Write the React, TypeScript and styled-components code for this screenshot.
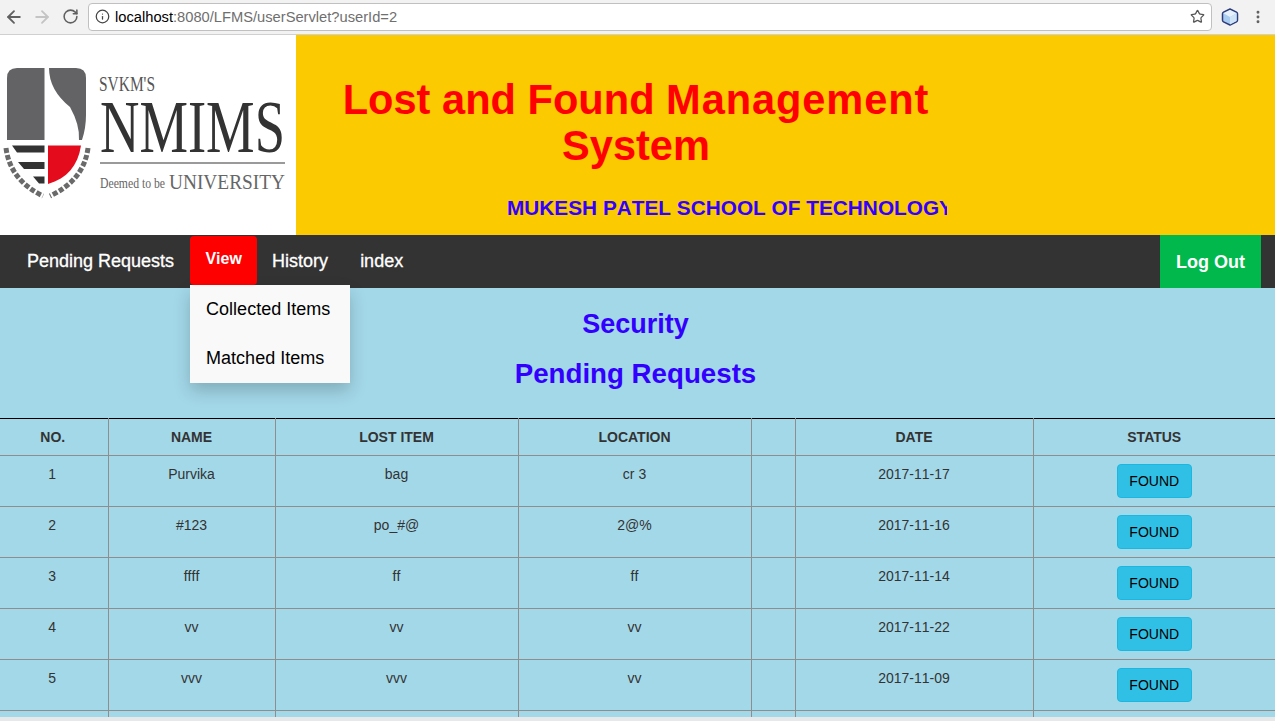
import React from 'react'
import styled, { createGlobalStyle } from 'styled-components'
import { ArrowLeft, ArrowRight, Info, MoreVertical, RotateCw, Star } from 'lucide-react'

const SANS = '"Liberation Sans", Arial, sans-serif'

const rows = [
  { no: 1, name: 'Purvika', item: 'bag', location: 'cr 3', date: '2017-11-17' },
  { no: 2, name: '#123', item: 'po_#@', location: '2@%', date: '2017-11-16' },
  { no: 3, name: 'ffff', item: 'ff', location: 'ff', date: '2017-11-14' },
  { no: 4, name: 'vv', item: 'vv', location: 'vv', date: '2017-11-22' },
  { no: 5, name: 'vvv', item: 'vvv', location: 'vv', date: '2017-11-09' },
]

const columns = [108, 167, 243, 233, 44, 238, 242]

const GlobalStyle = createGlobalStyle`
  html, body {
    margin: 0;
    padding: 0;
    overflow: hidden;
    background: #a3d8e9;
    font-family: ${SANS};
    font-kerning: none;
  }
  * {
    box-sizing: border-box;
  }
`

const Page = styled.div`
  width: 1275px;
  height: 721px;
  display: flex;
  flex-direction: column;
  overflow: hidden;
`

const BrowserBar = styled.div`
  flex: 0 0 35px;
  display: flex;
  align-items: center;
  padding: 0 6px 1px 4px;
  background: #f2f2f2;
  border-bottom: 1px solid #d0d0d0;
  color: #5f6368;
`

const NavIcon = styled.span<{ $muted?: boolean }>`
  width: 20px;
  height: 20px;
  margin-right: 8px;
  display: flex;
  align-items: center;
  justify-content: center;
  color: ${props => (props.$muted ? '#c4c4c4' : '#606060')};
`

const AddressBox = styled.div`
  width: 1124px;
  height: 28px;
  padding: 0 6px 0 6px;
  display: flex;
  align-items: center;
  background: #fff;
  border: 1px solid #c0c0c0;
  border-radius: 4px;
  font-size: 14.7px;
  color: #6f6f6f;
`

const Host = styled.span`
  color: #000;
`

const Url = styled.span`
  flex: 1;
  margin-left: 5px;
`

const ExtensionSlot = styled.span`
  margin-left: 8px;
  width: 20px;
  height: 20px;
  display: flex;
  align-items: center;
  justify-content: center;
`

const MenuSlot = styled.span`
  margin-left: 8px;
  width: 20px;
  display: flex;
  justify-content: center;
  color: #606060;
`

const Banner = styled.header`
  flex: 0 0 200px;
  display: flex;
  background: #fbca00;
`

const LogoPanel = styled.div`
  width: 296px;
  background: #fff;
  display: flex;
  align-items: center;
`

const TitlePanel = styled.div`
  width: 680px;
  padding: 42px 0 0 0;
  display: flex;
  flex-direction: column;
`

const Title = styled.h1`
  margin: 0;
  font-size: 41.6px;
  line-height: 46px;
  font-weight: 700;
  color: #ff0000;
  text-align: center;
`

const WideWord = styled.span`
  letter-spacing: 0.9px;
`

const Ticker = styled.div`
  margin: 26px 0 0 211px;
  width: 440px;
  overflow: hidden;
  white-space: nowrap;
  font-size: 20.8px;
  line-height: 26px;
  font-weight: 700;
  color: #3300ff;
`

const NavBar = styled.nav`
  flex: 0 0 53px;
  display: flex;
  align-items: flex-start;
  padding: 1px 14px 0 11px;
  background: #333;
`

const NavItem = styled.a`
  height: 49px;
  padding: 2px 16px 0;
  display: flex;
  align-items: center;
  font-size: 18px;
  color: #fff;
  -webkit-text-stroke: 0.3px #fff;
`

const DropdownWrap = styled.div`
  position: relative;
  margin-right: -1px;
`

const ActiveItem = styled.a`
  height: 49px;
  width: 67px;
  padding-bottom: 3px;
  display: flex;
  align-items: center;
  justify-content: center;
  font-size: 16px;
  font-weight: 700;
  color: #fff;
  background: #ff0000;
  border-radius: 4px;
`

const Dropdown = styled.div`
  position: absolute;
  top: 49px;
  left: 0;
  z-index: 2;
  width: 160px;
  height: 98px;
  background: #f9f9f9;
  box-shadow: 0 8px 16px rgba(0, 0, 0, 0.2);
`

const DropdownLink = styled.a`
  display: block;
  height: 49px;
  padding: 0 16px;
  line-height: 48px;
  font-size: 18px;
  color: #000;
`

const LogOut = styled.a`
  margin-left: auto;
  height: 53px;
  width: 101px;
  margin-top: -1px;
  padding-top: 1px;
  display: flex;
  align-items: center;
  justify-content: center;
  font-size: 18px;
  font-weight: 700;
  color: #fff;
  background: #00b84c;
`

const Content = styled.main`
  flex: 1;
  min-height: 0;
  overflow: hidden;
  background: #a3d8e9;
`

const Heading = styled.h2<{ $top: number; $size: number }>`
  margin: ${props => props.$top}px 0 0;
  padding-right: 4px;
  font-size: ${props => props.$size}px;
  line-height: 32px;
  font-weight: 700;
  color: #3300ff;
  text-align: center;
`

const Table = styled.table`
  margin-top: 28px;
  width: 1275px;
  table-layout: fixed;
  border-collapse: collapse;
  border-top: 1px solid #000;
  font-size: 14px;
  color: #333;
`

const HeadCell = styled.th`
  height: 37px;
  padding: 0;
  text-align: center;
  font-size: 14px;
  font-weight: 700;
  font-kerning: normal;
  border-left: 1px solid #8e8e8e;
  border-bottom: 1px solid #8e8e8e;
  &:first-child {
    border-left: 0;
    padding-right: 2px;
  }
`

const Cell = styled.td`
  height: 51px;
  padding: 10px 0 0;
  vertical-align: top;
  text-align: center;
  line-height: 16px;
  border-left: 1px solid #8e8e8e;
  border-bottom: 1px solid #8e8e8e;
  &:first-child {
    border-left: 0;
    padding-right: 3px;
  }
`

const ActionCell = styled(Cell)`
  padding-top: 8px;
`

const FoundButton = styled.button`
  width: 75px;
  height: 34px;
  padding: 0;
  display: inline-block;
  vertical-align: top;
  font-family: ${SANS};
  font-size: 14px;
  color: #000;
  background: #31c0e5;
  border: 1px solid #1ab7e0;
  border-radius: 4px;
`

const BottomEdge = styled.div`
  flex: 0 0 4px;
  background: #e6e8e9;
`

const Logo = () => (
  <svg width="296" height="200" viewBox="0 0 296 200">
    <path d="M7 105V43q0-10 10-10h27.500v72z" fill="#636365" />
    <path d="M49 33h27q10 0 10 10v37q0 13-4 25h-3q1-15-9-33Q49 55 49 33z" fill="#636365" />
    <path d="M12 110.500h32.500v7H17zM18 127h26.500v7H24zM33 141.500h11.500v7H39z" fill="#333" />
    <path d="M48 110.500h33c-3 20-14 33-33 38.500z" fill="#e30b1c" />
    <path d="M6 113Q10 145 43 161" stroke="#6a6a6a" strokeWidth="5" strokeDasharray="5 2" fill="none" />
    <path d="M88 113Q84 145 50 161" stroke="#6a6a6a" strokeWidth="5" strokeDasharray="5 2" fill="none" />
    <text x="99" y="56" fontFamily="Liberation Serif" fontSize="21" fill="#555" textLength="56" lengthAdjust="spacingAndGlyphs">SVKM'S</text>
    <text x="100" y="117" fontFamily="Liberation Serif" fontSize="74" fill="#333" textLength="185" lengthAdjust="spacingAndGlyphs">NMIMS</text>
    <rect x="100" y="127" width="185" height="2" fill="#9a9a9a" />
    <text x="100" y="153" fontFamily="Liberation Serif" fontSize="14.500" fill="#666" textLength="65" lengthAdjust="spacingAndGlyphs">Deemed to be</text>
    <text x="169" y="154" fontFamily="Liberation Serif" fontSize="21" fill="#666" textLength="116" lengthAdjust="spacingAndGlyphs">UNIVERSITY</text>
  </svg>
)

const CubeIcon = () => (
  <svg width="18" height="18" viewBox="0 0 18 18">
    <path d="M9 1l6.500 3.200q1 .5 1 1.500v6.600q0 1-1 1.500L9 17l-6.500-3.200q-1-.5-1-1.500V5.700q0-1 1-1.500z" fill="#a9cdf0" stroke="#2f3d7a" strokeWidth="1.500" strokeLinejoin="round" />
    <path d="M9 9l6.500-3.800L9 2 2.500 5.200z" fill="#e6f1fb" />
    <path d="M9 9v7.500L15.500 13V5.200z" fill="#cfe3f7" />
  </svg>
)

export default function App() {
  return (
    <Page>
      <GlobalStyle />
      <BrowserBar>
        <NavIcon><ArrowLeft size={20} strokeWidth={2.2} /></NavIcon>
        <NavIcon $muted><ArrowRight size={20} strokeWidth={2.2} /></NavIcon>
        <NavIcon><RotateCw size={17} strokeWidth={2.2} /></NavIcon>
        <AddressBox>
          <Info size={15} color="#444" />
          <Url><Host>localhost</Host>:8080/LFMS/userServlet?userId=2</Url>
          <Star size={15} color="#555" />
        </AddressBox>
        <ExtensionSlot><CubeIcon /></ExtensionSlot>
        <MenuSlot><MoreVertical size={16} strokeWidth={2.4} /></MenuSlot>
      </BrowserBar>
      <Banner>
        <LogoPanel><Logo /></LogoPanel>
        <TitlePanel>
          <Title>Lost and Found <WideWord>Management</WideWord> System</Title>
          <Ticker>MUKESH PATEL SCHOOL OF TECHNOLOGY</Ticker>
        </TitlePanel>
      </Banner>
      <NavBar>
        <NavItem>Pending Requests</NavItem>
        <DropdownWrap>
          <ActiveItem>View</ActiveItem>
          <Dropdown>
            <DropdownLink>Collected Items</DropdownLink>
            <DropdownLink>Matched Items</DropdownLink>
          </Dropdown>
        </DropdownWrap>
        <NavItem>History</NavItem>
        <NavItem>index</NavItem>
        <LogOut>Log Out</LogOut>
      </NavBar>
      <Content>
        <Heading $top={20} $size={27}>Security</Heading>
        <Heading $top={18} $size={27.7}>Pending Requests</Heading>
        <Table>
          <colgroup>
            {columns.map((width, i) => (
              <col key={i} width={width} />
            ))}
          </colgroup>
          <thead>
            <tr>
              <HeadCell>NO.</HeadCell>
              <HeadCell>NAME</HeadCell>
              <HeadCell>LOST ITEM</HeadCell>
              <HeadCell>LOCATION</HeadCell>
              <HeadCell />
              <HeadCell>DATE</HeadCell>
              <HeadCell>STATUS</HeadCell>
            </tr>
          </thead>
          <tbody>
            {rows.map(row => (
              <tr key={row.no}>
                <Cell>{row.no}</Cell>
                <Cell>{row.name}</Cell>
                <Cell>{row.item}</Cell>
                <Cell>{row.location}</Cell>
                <Cell />
                <Cell>{row.date}</Cell>
                <ActionCell><FoundButton>FOUND</FoundButton></ActionCell>
              </tr>
            ))}
            <tr>
              {columns.map((_, i) => (
                <Cell key={i} />
              ))}
            </tr>
          </tbody>
        </Table>
      </Content>
      <BottomEdge />
    </Page>
  )
}
